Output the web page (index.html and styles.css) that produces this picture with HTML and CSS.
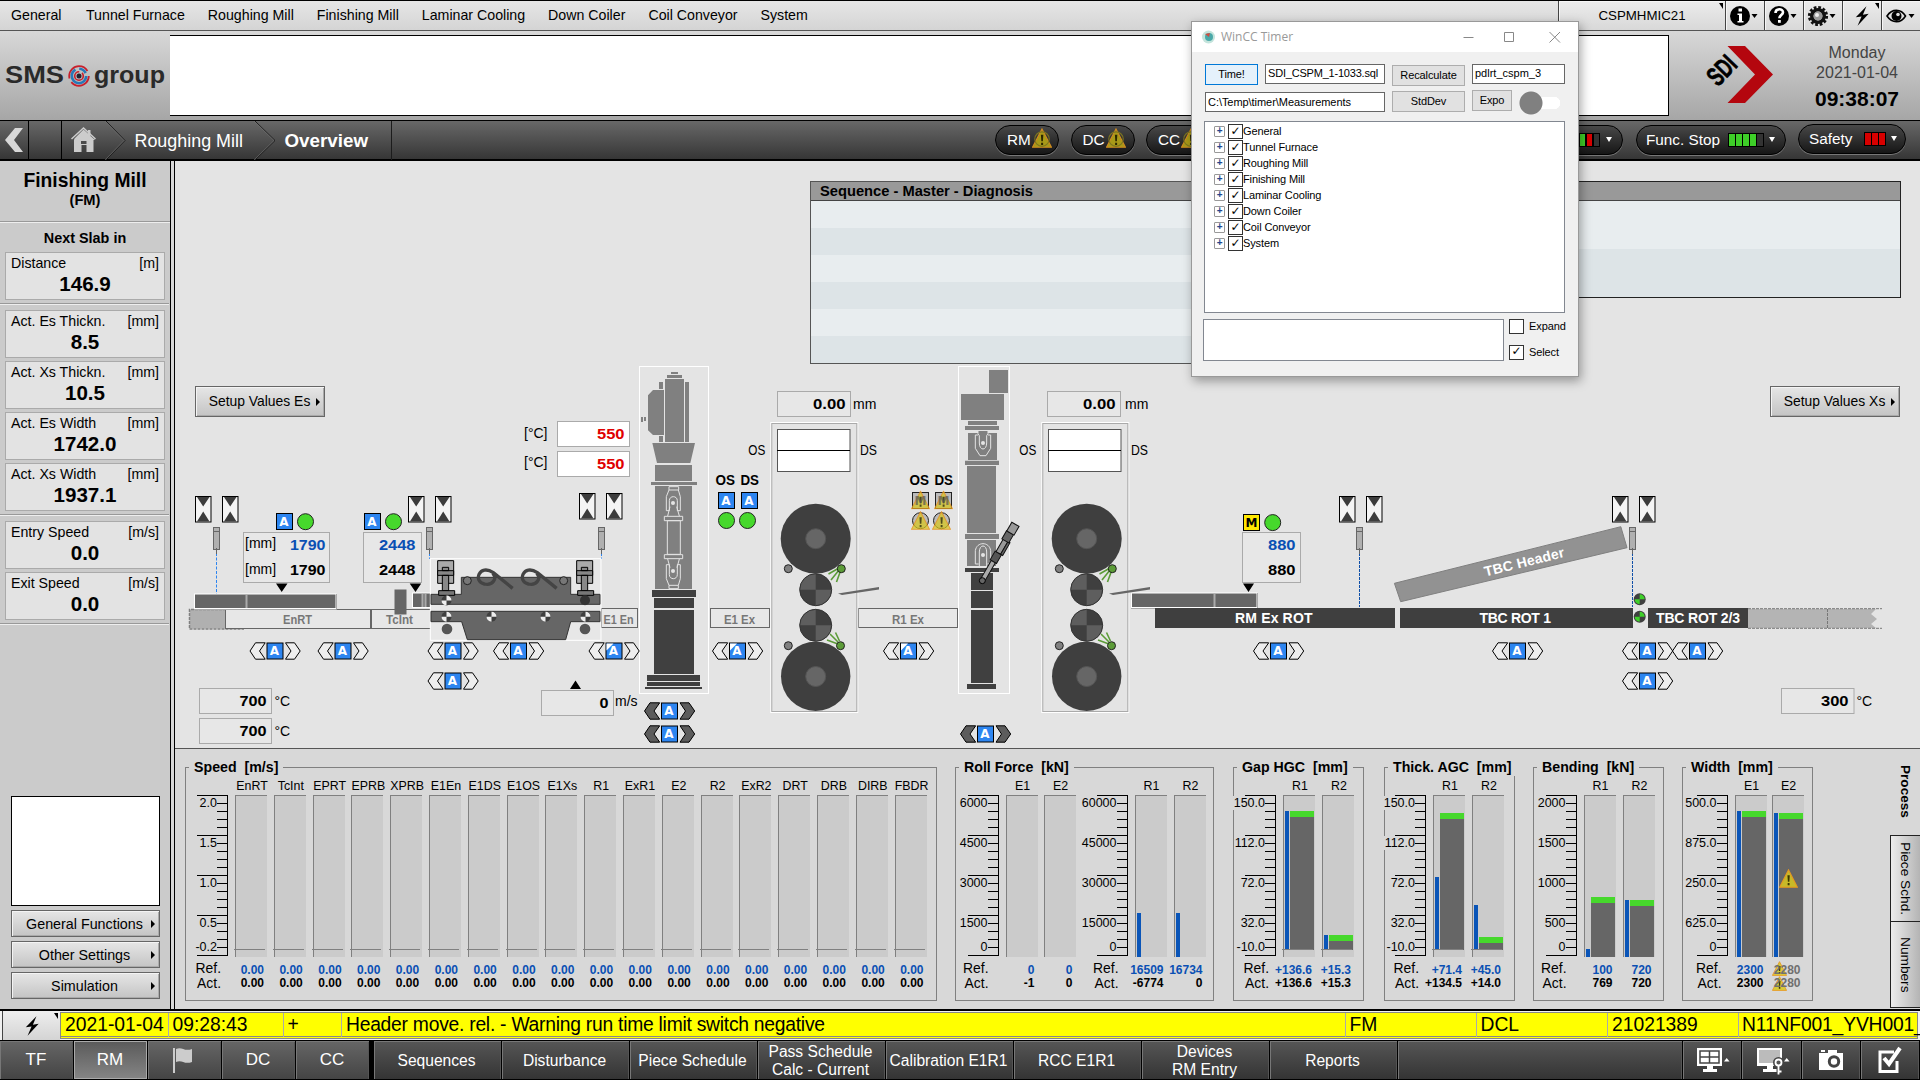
FILE: index.html
```html
<!DOCTYPE html>
<html lang="en">
<head>
<meta charset="utf-8">
<title>Roughing Mill - Overview</title>
<link rel="stylesheet" href="styles.css">
</head>
<body>
<svg class="defs" width="0" height="0">
  <defs>
    <symbol id="warn" viewBox="0 0 18 18"><path d="M9 .8 17.5 17.3H.5z" fill="#d8c81e" fill-opacity=".85" stroke="#e8961e"/><path d="M8 6h2.200l-.4 6H8.400zM8.200 13.300h1.800v2H8.200z" fill="#3c3800"/></symbol>
    <symbol id="warnDim" viewBox="0 0 18 18"><path d="M9 .8 17.5 17.3H.5z" fill="#a89a18" stroke="#d08a20"/><circle cx="9" cy="10" r="6.500" fill="none" stroke="#7c7420"/><path d="M8 6h2.200l-.4 6H8.400zM8.200 13.300h1.800v2H8.200z" fill="#2c2800"/></symbol>
    <symbol id="bolt" viewBox="0 0 18 22"><path d="M14 0 2 12.500l6.500-1L4 22 16.500 8.500l-6.500 1z" fill="#000"/></symbol>
    <g id="valve"><rect x=".5" y=".5" width="15.500" height="25.500" fill="#f4f4f4" stroke="#000"/><path d="M2 1h12.500L8.200 10.500zM2 25.500h12.500L8.200 15.500z" fill="#3c3c3c"/></g>
    <g id="sensor"><rect x="-3" y=".5" width="6" height="22" fill="#b0b0b0" stroke="#666"/><path d="M-3 4.500h6M0 21v6" stroke="#666" fill="none"/></g>
    <g id="modeA"><rect x="-8" y="-8" width="16" height="16" fill="#2d85f0" stroke="#000"/><text x="-.5" y="4.300" class="mode">A</text></g>
    <g id="arrows"><path d="M-25 0-19.500-8.200H-9.800L-15.500 0-9.800 8.200h-9.700zM25.200 0 19.500-8.200H10.500L16 0l-5.500 8.200h9z" stroke="#000"/></g>
    <g id="drive"><use href="#arrows" fill="#eee"/><use href="#modeA"/></g>
    <g id="driveOn"><use href="#arrows" fill="#5c5c5c"/><use href="#modeA"/></g>
    <g id="drivePart"><use href="#drive"/><path d="M-7.500-7.500h7l-7 7z" fill="#fff"/></g>
    <g id="quad"><circle r="16" fill="#3f3f3f"/><path d="M0 0V-16A16 16 0 0 0-16 0zM0 0V16A16 16 0 0 0 16 0z" fill="#5e5e5e"/><circle r="16" fill="none" stroke="#333"/></g>
    <g id="mark"><circle r="5" fill="#3f3f3f"/><path d="M0 0V-5A5 5 0 0 1 5 0zM0 0V5A5 5 0 0 1-5 0z" fill="#eee"/></g>
    <g id="markOn"><circle r="6" fill="#3f3f3f"/><path d="M0 0V-5A5 5 0 0 1 5 0zM0 0V5A5 5 0 0 1-5 0z" fill="#3fd02a"/></g>
    <g id="stand">
      <rect x="770.800" y="422.500" width="87" height="290" fill="none" stroke="#fff"/>
      <rect x="771.800" y="423.500" width="85" height="288" fill="none" stroke="#aaa"/>
      <rect x="777.500" y="429.500" width="72.500" height="42" fill="#fff" stroke="#555"/><path d="M777 450.500h73" stroke="#000"/>
      <g fill="#3f3f3f"><circle cx="815.700" cy="538.700" r="35"/><circle cx="815.700" cy="676.300" r="34.700"/></g>
      <g fill="#666" stroke="#555"><circle cx="815.700" cy="538.700" r="10"/><circle cx="815.700" cy="676.500" r="10"/></g>
      <use href="#quad" x="815.700" y="589.700"/><use href="#quad" x="815.700" y="625.300"/>
      <g fill="#808080" stroke="#222"><circle cx="788.300" cy="568.700" r="4"/><circle cx="788.300" cy="645.700" r="4"/></g>
      <g stroke="#5c9c38" stroke-width="1.600"><path d="M839 568l-10.500 6M839 570l-8 10M840.500 571l-4 11M838 644l-11-4M838 642l-8-8M839.500 641l-4-8.500"/></g>
      <g fill="#5c9c38" stroke="#222"><circle cx="841.300" cy="568.700" r="4"/><circle cx="840.500" cy="645.700" r="4"/></g>
      <path d="M838 593.500 879 587v2.500L842 595z" fill="#666"/>
      <text x="748.300" y="455" class="t" textLength="17" lengthAdjust="spacingAndGlyphs">OS</text><text x="860" y="455" class="t" textLength="17" lengthAdjust="spacingAndGlyphs">DS</text>
    </g>
  </defs>
</svg>

<nav class="menu">
  <span>General</span><span>Tunnel Furnace</span><span>Roughing Mill</span><span>Finishing Mill</span><span>Laminar Cooling</span><span>Down Coiler</span><span>Coil Conveyor</span><span>System</span>
  <div class="tools">
    <div class="tool host notch">CSPMHMIC21</div>
    <div class="tool"><svg width="34" height="26"><circle cx="12" cy="13" r="10"/><path d="M10.500 5.500h3.500v3h-3.500zM9.500 10.500H14V18h1.500v1.500h-6V18H11v-6H9.500z" fill="#fff"/><path d="M23.500 11h6l-3 4z"/></svg></div>
    <div class="tool"><svg width="34" height="26"><circle cx="12" cy="13" r="10"/><path d="M8.500 10c0-5 7.500-4.800 7.500-.8 0 2.800-3.600 3-3.600 6" fill="none" stroke="#fff" stroke-width="2.600"/><path d="M11 17h2.800v2.800H11z" fill="#fff"/><path d="M23.500 11h6l-3 4z"/></svg></div>
    <div class="tool"><svg width="34" height="26"><circle cx="12" cy="13" r="8.600" fill="none" stroke="#111" stroke-width="3" stroke-dasharray="2.700 1.800"/><circle cx="12" cy="13" r="6.200" fill="none" stroke="#111" stroke-width="3.600"/><circle cx="12" cy="13" r="4.500" fill="#999"/><circle cx="11" cy="12" r="2" fill="#eee"/><path d="M23.500 11h6l-3 4z"/></svg></div>
    <div class="tool notch"><svg class="boltic"><use href="#bolt"/></svg></div>
    <div class="tool"><svg width="34" height="26"><path d="M3 13c5-7.500 14-7.500 18.500 0-4.500 7.500-13.500 7.500-18.500 0z" fill="none" stroke="#000" stroke-width="1.600"/><circle cx="12.500" cy="13" r="5"/><circle cx="14" cy="11.500" r="1.800" fill="#ddd"/><path d="M24.500 11h6l-3 4z"/></svg></div>
  </div>
</nav>

<header class="head">
  <div class="brand"><svg width="168" height="36"><text x="5" y="25" class="sms" textLength="59" lengthAdjust="spacingAndGlyphs">SMS</text><text x="94" y="25" class="sms" textLength="71" lengthAdjust="spacingAndGlyphs">group</text>
    <g fill="none"><circle cx="79" cy="18" r="9.800" stroke="#c8202c" stroke-width="1.800" stroke-dasharray="24 4 28 6"/><circle cx="79" cy="18" r="7.200" stroke="#2878b8" stroke-width="2.600" stroke-dasharray="30 4 8 3"/><circle cx="79" cy="18" r="4.300" stroke="#c8202c" stroke-width="1.600" stroke-dasharray="20 3"/></g><circle cx="79" cy="18" r="2.500" fill="#223"/></svg></div>
  <div class="board"></div>
  <div class="sdi"><svg width="80" height="64"><path d="M27.500 3H45L73 31.500 45 60H27.500L55 31.500z" fill="#b4060e"/><text class="sditext" transform="translate(18 44.500) rotate(-46)" textLength="30" lengthAdjust="spacingAndGlyphs">SDI</text></svg></div>
  <div class="clock"><div>Monday</div><div>2021-01-04</div><b>09:38:07</b></div>
</header>

<div class="crumbs">
  <div class="back"><svg width="26" height="38"><path d="M13 7h8L12 19l9 12h-8L3 19z" fill="#d8d8d8"/></svg></div>
  <div class="gap"></div>
  <svg class="trail" width="331" height="39"><path d="M12.500 17.500 21.500 8.500l4.500 4V9H28.500v6l4.500 4H31.500v12H24.500v-7h-5v7h-7.500V19z" fill="#ccc"/><path d="M22.500 20h-3.500v3h5.500v-3z" fill="#4c4c4c"/><path d="M9.500 18 21.500 7 33.500 18" fill="none" stroke="#ccc" stroke-width="1.500"/><g fill="none" stroke="#1c1c1c"><path d="M44 0 63 19.500 44 39M193 0l20 19.500L193 39M329.500 0v39"/></g><g fill="none" stroke="#777" stroke-opacity=".6"><path d="M43 0 62 19.500 43 39M192 0l20 19.500L192 39"/></g><text x="72.500" y="26" class="crumb">Roughing Mill</text><text x="222.500" y="26" class="crumb here">Overview</text></svg>
  <div class="pills">
    <div class="pill"><span>RM</span><svg class="w"><use href="#warnDim"/></svg></div>
    <div class="pill"><span>DC</span><svg class="w"><use href="#warnDim"/></svg></div>
    <div class="pill"><span>CC</span><svg class="w"><use href="#warnDim"/></svg></div>
    <div class="pill wide mode1"><i class="g"></i><i class="r"></i><i class="g"></i><i class="r"></i><i></i><em></em></div>
    <div class="pill wide func"><span>Func. Stop</span><i class="g"></i><i class="g"></i><i class="g"></i><i class="g"></i><i></i><em></em></div>
    <div class="pill wide safety"><span>Safety</span><i class="r"></i><i class="r"></i><i class="r"></i><em></em></div>
  </div>
</div>

<div class="middle">
  <aside class="side">
    <div class="title"><h1>Finishing Mill</h1><p>(FM)</p></div>
    <h2>Next Slab in</h2>
    <div class="val"><div><span>Distance</span><span>[m]</span></div><b>146.9</b></div>
    <hr>
    <div class="val"><div><span>Act. Es Thickn.</span><span>[mm]</span></div><b>8.5</b></div>
    <div class="val"><div><span>Act. Xs Thickn.</span><span>[mm]</span></div><b>10.5</b></div>
    <div class="val"><div><span>Act. Es Width</span><span>[mm]</span></div><b>1742.0</b></div>
    <div class="val"><div><span>Act. Xs Width</span><span>[mm]</span></div><b>1937.1</b></div>
    <hr>
    <div class="val"><div><span>Entry Speed</span><span>[m/s]</span></div><b>0.0</b></div>
    <div class="val"><div><span>Exit Speed</span><span>[m/s]</span></div><b>0.0</b></div>
    <hr>
    <div class="blank"></div>
    <div class="btn">General Functions</div>
    <div class="btn">Other Settings</div>
    <div class="btn">Simulation</div>
  </aside>

  <main>
    <section class="scene">
      <div class="table seq"><h3>Sequence - Master - Diagnosis</h3><div></div><div></div><div></div><div></div><div></div><div></div></div>
      <div class="table sub"><h3></h3><div></div><div></div></div>
      <div class="btn setup es">Setup Values Es</div>
      <div class="btn setup xs">Setup Values Xs</div>
      <svg class="plant" width="1745" height="587" viewBox="175 161 1745 587">
        <!-- entry side -->
        <use href="#valve" x="195" y="496"/><use href="#valve" x="222" y="496"/><use href="#valve" x="408" y="496"/><use href="#valve" x="435" y="496"/><use href="#valve" x="579" y="493"/><use href="#valve" x="606" y="493"/>
        <use href="#valve" x="1339" y="496"/><use href="#valve" x="1366" y="496"/><use href="#valve" x="1612" y="496"/><use href="#valve" x="1639" y="496"/>
        <g stroke="#2d85f0" stroke-dasharray="3 1.500"><path d="M216.500 553v41M429.500 553v6M601.500 553v6"/></g>
        <g stroke="#1050a8" stroke-dasharray="3 1"><path d="M1359.500 553v54M1632.500 553v54"/></g>
        <use href="#sensor" x="216.500" y="527"/><use href="#sensor" x="429.500" y="527"/><use href="#sensor" x="601.500" y="527"/><use href="#sensor" x="1359.500" y="527"/><use href="#sensor" x="1632.500" y="527"/>
        <use href="#modeA" x="284.500" y="521.500"/><use href="#modeA" x="372.500" y="521.500"/>
        <g fill="#46d82c" stroke="#222"><circle cx="305.500" cy="521.700" r="8"/><circle cx="393.500" cy="521.700" r="8"/><circle cx="726.500" cy="520.500" r="8"/><circle cx="747.500" cy="520.500" r="8"/><circle cx="1272.700" cy="522.600" r="8"/></g>
        <g fill="#e7e7e7" stroke="#aaa"><rect x="243.500" y="532.500" width="86" height="50"/><rect x="363.500" y="532.500" width="58" height="50"/><rect x="1242.500" y="532.500" width="58" height="50"/>
          <rect x="199.500" y="688.500" width="72" height="25"/><rect x="199.500" y="718.500" width="72" height="25"/><rect x="541.500" y="690.500" width="72" height="25"/><rect x="777.500" y="391.500" width="73" height="25"/><rect x="1047.500" y="391.500" width="73" height="25"/><rect x="1781.500" y="688.500" width="72.500" height="25"/></g>
        <g fill="#fff" stroke="#aaa"><rect x="557.500" y="421.500" width="72" height="25"/><rect x="557.500" y="451.500" width="72" height="25"/></g>
        <g class="t"><text x="245" y="548">[mm]</text><text x="245" y="573.500">[mm]</text><text x="274.500" y="706">°C</text><text x="274.500" y="736">°C</text><text x="524" y="438">[°C]</text><text x="524" y="467">[°C]</text><text x="615" y="706">m/s</text><text x="853" y="409">mm</text><text x="1125" y="409">mm</text><text x="1856.500" y="706">°C</text></g>
        <g class="v ref"><text x="290" y="550" textLength="35.500" lengthAdjust="spacingAndGlyphs">1790</text><text x="379" y="550" textLength="36.500" lengthAdjust="spacingAndGlyphs">2448</text><text x="1268" y="550" textLength="27.500" lengthAdjust="spacingAndGlyphs">880</text></g>
        <g class="v"><text x="290" y="575" textLength="35.500" lengthAdjust="spacingAndGlyphs">1790</text><text x="379" y="575" textLength="36.500" lengthAdjust="spacingAndGlyphs">2448</text><text x="1268" y="575" textLength="27.500" lengthAdjust="spacingAndGlyphs">880</text><text x="239.500" y="706" textLength="27" lengthAdjust="spacingAndGlyphs">700</text><text x="239.500" y="736" textLength="27" lengthAdjust="spacingAndGlyphs">700</text><text x="599.500" y="708" textLength="9" lengthAdjust="spacingAndGlyphs">0</text><text x="813" y="409" textLength="32.500" lengthAdjust="spacingAndGlyphs">0.00</text><text x="1083" y="409" textLength="32.500" lengthAdjust="spacingAndGlyphs">0.00</text><text x="1821" y="706" textLength="27.500" lengthAdjust="spacingAndGlyphs">300</text></g>
        <g class="v red"><text x="597" y="439.300" textLength="27.500" lengthAdjust="spacingAndGlyphs">550</text><text x="597" y="469.300" textLength="27.500" lengthAdjust="spacingAndGlyphs">550</text></g>
        <path d="M276 583.500h11.500L281.700 592zM409.700 583.500h11.500L415.500 592zM1243 583.500h11L1248.500 592zM570 689h11l-5.500-8.500z"/>
        <rect x="189.500" y="609.500" width="36" height="19" fill="#b0b0b0"/><path d="M226 609.500h-36.500v19.500H244" fill="none" stroke="#808080" stroke-width="1.500" stroke-dasharray="3 1"/>
        <g fill="#e7e7e7" stroke="#666"><rect x="225.500" y="609.500" width="145" height="19"/><rect x="371.500" y="609.500" width="60" height="19"/><rect x="601.500" y="608.500" width="36" height="19"/><rect x="710.500" y="608.500" width="59" height="19"/><rect x="858.500" y="608.500" width="99" height="19"/></g>
        <g class="rt"><text x="283" y="624" textLength="29" lengthAdjust="spacingAndGlyphs">EnRT</text><text x="386" y="624" textLength="27" lengthAdjust="spacingAndGlyphs">TcInt</text><text x="603.500" y="623.500" textLength="30" lengthAdjust="spacingAndGlyphs">E1 En</text><text x="724" y="623.500" textLength="31" lengthAdjust="spacingAndGlyphs">E1 Ex</text><text x="892" y="623.500" textLength="32" lengthAdjust="spacingAndGlyphs">R1 Ex</text></g>
        <g fill="#666" stroke="#fff"><rect x="194.500" y="594" width="141.500" height="14.500"/><rect x="412.500" y="593" width="18" height="14.500"/><rect x="1131.500" y="593" width="125.500" height="14.500"/></g>
        <path d="M194 609.500h142.500V594M1131 608.500h126.500V593" fill="none" stroke="#aaa"/>
        <path d="M246.500 595v13M422.500 594v13M425.500 594v13M1214.500 594v13" stroke="#aaa" stroke-width="2"/>
        <rect x="394.500" y="589.500" width="12" height="25" fill="#666"/>

        <!-- descaler -->
        <g transform="translate(420 360) scale(.33333)">
          <rect x="31" y="596" width="512" height="245" fill="#e7e7e7" stroke="#fff" stroke-width="3"/>
          <g fill="#666" stroke="#333" stroke-width="3"><path d="M33 703h91v-51h328v51h88v30H33zM33 754h507v31h-88l-15 54H142l-17-54H33z"/></g>
          <path d="M410 685 352 638C310 610 290 665 325 672 350 678 365 655 350 640M278 685 220 638C178 610 158 665 193 672 218 678 233 655 218 640" fill="none" stroke="#444" stroke-width="10"/>
          <g fill="#777" stroke="#222" stroke-width="3"><circle cx="142" cy="662" r="12"/><circle cx="431" cy="662" r="12"/></g>
          <g id="cyl" stroke="#000" stroke-width="3"><path d="M53 602h48v68H53z" fill="#aaa"/><path d="M53 632h48v14H53zM67 646h19v46H67zM67 622h19v10H67z" fill="#888"/><path d="M56 692h48v14H56z" fill="#777"/></g>
          <use href="#cyl" x="417"/>
          <circle cx="81" cy="807" r="16" fill="#555"/><circle cx="495" cy="807" r="16" fill="#555"/><circle cx="495" cy="721" r="15" fill="#333"/>
        </g>
        <use href="#mark" x="446.500" y="600.500"/><use href="#mark" x="446.500" y="616.700"/><use href="#mark" x="491.500" y="616.700"/><use href="#mark" x="545.500" y="616.700"/><use href="#mark" x="585.500" y="616.700"/>

        <!-- edger E1 -->
        <g transform="translate(420 360) scale(.33333)">
          <rect x="658.500" y="19.500" width="207" height="981" fill="none" stroke="#fff" stroke-width="3"/>
          <path fill="#808080" d="M753 36h21v6h-21zM741 45h45v9h-45zM735 57h57v189h-57zM795 66h12v180h-12zM717 66h12v21h-12zM717 228h12v18h-12zM699 90h33v135h-33l-15-14V106zM663 171h6v15h-6zM672 171h6v12h-6zM697 249h128l-14 60H711zM705 315h111v48H705zM693 366h138v9H693zM705 378h111v309H705z"/>
          <path fill="#404040" d="M696 690h132v21H696zM702 714h120v30H702zM702 750h120v192H702zM681 945h159v18H681zM681 966h159v12H681zM675 981h171v6H675z"/>
          <g fill="none" stroke="#e4e4e4" stroke-width="3"><path d="M747 380h29v10h-29zM747 390l-8 20v42h9v-30c0-16 24-16 24 0v30h9v-42l-6-20M750 440l-7 28M770 440l8 28M733 469h55v13h-55zM742 482h39v101h-39zM733 584h55v12h-55zM743 597l7 26M778 597l-7 26M747 686v-10l-8-20v-42h9v30c0 16 24 16 24 0v-30h9v42l-6 20v10zM747 676h28"/></g>
          <circle cx="759" cy="429" r="6" fill="#e4e4e4"/><circle cx="759" cy="633" r="6" fill="#e4e4e4"/>
        </g>
        <g class="osds"><text x="715.500" y="485" textLength="19.500" lengthAdjust="spacingAndGlyphs">OS</text><text x="740.500" y="485" textLength="18.500" lengthAdjust="spacingAndGlyphs">DS</text><text x="909.500" y="485" textLength="19.500" lengthAdjust="spacingAndGlyphs">OS</text><text x="934.500" y="485" textLength="18.500" lengthAdjust="spacingAndGlyphs">DS</text></g>
        <use href="#modeA" x="726.500" y="500.500"/><use href="#modeA" x="749.500" y="500.500"/>

        <use href="#stand"/><use href="#stand" x="271"/>

        <!-- edger E2 -->
        <g transform="translate(880 360) scale(.33333)">
          <rect x="235.500" y="19.500" width="153" height="981" fill="none" stroke="#fff" stroke-width="3"/>
          <path fill="#808080" d="M327 30h57v69h-57zM243 102h129v78H243zM264 183h87v12h-87zM255 198h102v12H255zM264 219h87v81h-87zM255 302h102v13H255zM261 318h87v201h-87zM255 522h102v15H255zM261 540h87v78h-87zM294 213h30v12h-30z"/>
          <path fill="#404040" d="M255 624h102v12H255zM273 639h66v51h-66zM273 693h66v51h-66zM273 750h66v219h-66zM261 972h87v15h-87z"/>
          <path d="M294 213v8l4 6v22c0 24 22 24 22 0v-22l4-6v-8M294 225h-8v40l14 22h18l14-22v-40h-8M298 618v-42c0-24 22-24 22 0v42M286 612v-40c4-28 42-28 46 0v40h-10M286 612h10" fill="none" stroke="#e4e4e4" stroke-width="3"/>
          <circle cx="309" cy="249" r="6" fill="#e4e4e4"/><circle cx="309" cy="585" r="6" fill="#e4e4e4"/>
          <g transform="translate(307 662) rotate(30)" stroke="#111" stroke-width="3"><path d="M-7 0v-70H7V0z" fill="#aaa"/><path d="M-11-96h22v30h-22z" fill="#555"/><path d="M-8-140H8v44H-8z" fill="#999"/><path d="M8-140h7v44H8z" fill="#666"/><path d="M-12-166h24v28h-24z" fill="#666"/><path d="M-11-196h25v30h-25z" fill="#999"/></g>
          <circle cx="307" cy="662" r="9" fill="#666" stroke="#000" stroke-width="3"/>
        </g>
        <g fill="#bbb" stroke="#222"><rect x="912.500" y="492.500" width="16" height="16"/><rect x="935.500" y="492.500" width="16" height="16"/><circle cx="920.500" cy="520.700" r="8"/><circle cx="941.500" cy="520.700" r="8"/></g>
        <g opacity=".85"><use href="#warn" x="911" y="490.500" width="19" height="19"/><use href="#warn" x="934" y="490.500" width="19" height="19"/><use href="#warn" x="911" y="511" width="19" height="19"/><use href="#warn" x="932" y="511" width="19" height="19"/></g>
        <g class="mode dim"><text x="920.500" y="505">M</text><text x="943.500" y="505">M</text></g>
        <rect x="1243.500" y="514.500" width="16" height="16" fill="#ffe800" stroke="#000"/><text x="1251.500" y="527" class="mode blk">M</text>

        <!-- exit side -->
        <g fill="#3f3f3f"><rect x="1155" y="608" width="240" height="20"/><rect x="1400" y="608" width="233" height="20"/><rect x="1648" y="608" width="100" height="20"/></g>
        <path d="M1748 609h128l-5 5 6 5-6 5 5 4h-128z" fill="#b4b4b4"/><path d="M1748 608.700h134M1748 628.300h134M1827.500 609v19" stroke="#777" stroke-dasharray="3 1"/>
        <g class="rot"><text x="1235" y="623.300" textLength="77.500">RM Ex ROT</text><text x="1479.500" y="623.300" textLength="71.500">TBC ROT 1</text><text x="1656" y="623.300" textLength="84">TBC ROT 2/3</text></g>
        <path d="M1394.400 583.300 1620.800 526.700 1627 547.700 1400.700 601.700z" fill="#929292" stroke="#808080"/>
        <text class="rot" transform="translate(1485.500 576.500) rotate(-13.900)" textLength="82">TBC Header</text>
        <use href="#markOn" x="1639.700" y="599.300"/><use href="#markOn" x="1639.700" y="616.700"/>

        <use href="#drive" x="275" y="651"/><use href="#drive" x="343" y="651"/><use href="#drive" x="453" y="651"/><use href="#drive" x="453" y="681"/><use href="#drive" x="518.500" y="651"/><use href="#drivePart" x="614" y="651"/><use href="#drivePart" x="737.500" y="651"/><use href="#drivePart" x="908.500" y="651"/>
        <use href="#driveOn" x="669.500" y="711"/><use href="#driveOn" x="669.500" y="734"/><use href="#driveOn" x="985.500" y="734"/>
        <use href="#drive" x="1278.500" y="651"/><use href="#drive" x="1517.500" y="651"/><use href="#drive" x="1647.500" y="651"/><use href="#drive" x="1697.500" y="651"/><use href="#drive" x="1647.500" y="681"/>
      </svg>
    </section>
    <section class="lower">
      <div class="charts" id="charts"></div>
      <div class="tabs"><div class="tab on">Process</div><div class="tab">Piece Schd.</div><div class="tab">Numbers</div></div>
    </section>
  </main>
</div>

<div class="alarm">
  <div class="alarmbtn notch"><svg class="boltic"><use href="#bolt"/></svg></div>
  <div class="row"><span>2021-01-04</span><span>09:28:43</span><span>+</span><span class="msg">Header move. rel. - Warning run time limit switch negative</span><span>FM</span><span>DCL</span><span>21021389</span><span class="id">N11NF001_YVH001_</span></div>
</div>

<footer class="foot">
  <div class="area">TF</div><div class="area sel">RM</div><div class="area"><svg width="24" height="28"><path d="M2 2v25" stroke="#ccc" stroke-width="2"/><path d="M4 3c6-3 8 3 16 0v13c-8 3-10-3-16 0z" fill="#ccc"/></svg></div><div class="area">DC</div><div class="area">CC</div>
  <div class="page first">Sequences</div><div class="page">Disturbance</div><div class="page">Piece Schedule</div><div class="page">Pass Schedule<br>Calc - Current</div><div class="page">Calibration E1R1</div><div class="page">RCC E1R1</div><div class="page">Devices<br>RM Entry</div><div class="page">Reports</div>
  <div class="fill"></div>
  <div class="act"><svg width="36" height="28"><path d="M3 2h25v18H3zM13 20h6v3h4v3H9v-3h4z" fill="#fff"/><path d="M6 5h19v12H6zM15.500 5v12M6 11h19" fill="none" stroke="#444" stroke-width="1.500"/><path d="M30 15.500h5.500L32.700 12z" fill="#fff"/></svg></div>
  <div class="act"><svg width="36" height="30"><path d="M3 3h25v18H3zM13 21h6v3h4v3H9v-3h4z" fill="#fff"/><path d="M5 5h21v13H5z" fill="#bbb"/><path d="M24.500 17v12" stroke="#444" stroke-width="4"/><circle cx="24.500" cy="17.500" r="3" fill="#555" stroke="#444" stroke-width="5"/><circle cx="24.500" cy="17.500" r="3" fill="#555" stroke="#fff" stroke-width="1.800"/><path d="M24.500 20v9.500M24.500 26.500h3" stroke="#fff" stroke-width="1.800"/><path d="M30 16.500h5.500L32.700 13z" fill="#fff"/></svg></div>
  <div class="act"><svg width="30" height="28"><path d="M3 7h9V4h9v3h6v17H3zM5 4h4v2H5z" fill="#fff"/><circle cx="18" cy="15.500" r="4.700" fill="none" stroke="#444" stroke-width="3"/></svg></div>
  <div class="act"><svg width="30" height="30"><path d="M22 16v10.500H5V7h14" fill="none" stroke="#fff" stroke-width="3"/><path d="M9 13l5 6L25 3" fill="none" stroke="#fff" stroke-width="4"/></svg></div>
</footer>

<div class="win">
  <div class="bar"><svg width="16" height="16"><circle cx="7.500" cy="8" r="6.500" fill="#c4e4dc"/><circle cx="8" cy="8" r="4" fill="#4aa8a8"/><path d="M4 5l5-1-1 4z" fill="#d04c40"/></svg><span>WinCC Timer</span>
    <svg class="ctl" width="100" height="12"><path d="M.5 6.500h10M41.500 1.500h9v9h-9zM86.500 1l10.500 10.500M97 1 86.500 11.500" fill="none" stroke="#888"/></svg></div>
  <div class="form">
    <div class="b time">Time!</div><div class="in sql">SDI_CSPM_1-1033.sql</div><div class="b rec">Recalculate</div><div class="in db">pdlrt_cspm_3</div>
    <div class="in path">C:\Temp\timer\Measurements</div><div class="b std">StdDev</div><div class="b exp">Expo</div><div class="toggle"></div>
  </div>
  <ul class="tree"><li>General</li><li>Tunnel Furnace</li><li>Roughing Mill</li><li>Finishing Mill</li><li>Laminar Cooling</li><li>Down Coiler</li><li>Coil Conveyor</li><li>System</li></ul>
  <div class="end"><div class="out"></div><div class="opts"><label>Expand</label><label class="ck">Select</label></div></div>
</div>
<script src="charts.js"></script>
</body>
</html>
```
FILE: styles.css
```css
* { box-sizing: border-box; }
body { margin: 0; width: 1920px; height: 1080px; overflow: hidden; position: relative; background: #d8d8d8; color: #000; font: 14.3px/16px "Liberation Sans", Arial, sans-serif; }
h1, h2, h3, p, ul { margin: 0; padding: 0; }
svg { display: block; flex: none; }
.defs { position: absolute; }

/* top menu */
.menu { height: 31px; display: flex; align-items: center; border-top: 1px solid #000; border-bottom: 1px solid #555; background: linear-gradient(#e6e6e6, #d4d4d4); padding-left: 11px; white-space: nowrap; }
.menu > span { margin-right: 23px; padding-bottom: 1px; font-size: 14.200px; }
.menu > span:nth-child(1) { margin-right: 24.500px; }
.tools { margin-left: auto; display: flex; height: 29px; }
.tool { width: 39px; display: flex; align-items: center; justify-content: center; border-left: 1px solid #444; background: linear-gradient(#ececec, #d8d8d8); box-shadow: inset 1px 1px #f6f6f6; position: relative; }
.host { width: 167px; font-size: 13.300px; }
.notch { position: relative; }
.notch::after { content: ""; position: absolute; right: 2px; top: 2px; border: 3px solid transparent; border-top-color: #000; border-right-color: #000; border-width: 3px 2.500px; }
.boltic { width: 16px; height: 20px; }

/* header */
.head { height: 89px; display: flex; background: linear-gradient(#d8d8d8, #a6a6a6); padding: 4px 0; }
.brand { width: 170px; padding-top: 23px; }
.sms { font-weight: bold; font-size: 23px; fill: #2a2a2a; }
.board { width: 1499px; background: #fff; border: 1px solid #000; border-left: 0; }
.sdi { width: 130px; padding: 8px 0 0 31px; }
.sditext { font-weight: bold; font-size: 27px; stroke: #000; stroke-width: .6px; }
.clock { width: 116px; text-align: center; font-size: 16px; line-height: 20px; color: #444; padding-top: 8px; }
.clock b { display: block; font-size: 21px; line-height: 24px; color: #000; margin-top: 4px; }

/* breadcrumb bar */
.crumbs { height: 41px; display: flex; border-top: 1px solid #000; border-bottom: 2px solid #000; background: linear-gradient(#686868, #363636); color: #fff; }
.back { width: 29px; border-right: 1px solid #000; padding-left: 2px; }
.gap { width: 33px; border-right: 1px solid #000; }
.trail { margin-top: 0; }
.crumb { font-size: 17.900px; fill: #fff; }
.here { font-weight: bold; font-size: 18.800px; }
.pills { flex: 1; display: flex; align-items: flex-start; padding: 4px 12px 0 602px; }
.pill { width: 64px; height: 30px; margin-right: 11.500px; border: 1.500px solid #000; border-radius: 15px; background: linear-gradient(#484848, #161616); box-shadow: 0 1px #777; display: flex; align-items: center; padding: 0 0 1px 11px; font-size: 15.300px; flex: none; }
.w { width: 20px; height: 20px; margin: -3px 0 0 1px; }
.wide i { width: 7.500px; height: 14px; border: 1px solid #000; background: #333; margin-right: -.5px; }
.wide i.g { background: #3ecf28; }
.wide i.r { background: #d80000; }
.wide em { border: 4px solid transparent; border-top: 5px solid #fff; border-bottom: 0; margin-left: 6px; border-width: 5px 3.500px 0; }
.mode1 { width: 112px; margin-left: 289px; margin-right: 13.500px; padding-left: 53px; }
.func { width: 149.500px; margin-right: 12.500px; padding-left: 9px; }
.func span { width: 82px; }
.safety { width: 108px; margin: -1px 0 0; padding-left: 10px; }
.safety span { width: 55px; }

/* left column */
.middle { display: flex; height: 848px; }
.side { width: 175px; height: 848px; background: #cbcbcb; border-right: 1px solid #000; position: relative; padding: 0 9px 0 5px; box-shadow: inset -3px 0 #d8d8d8, inset -4px 0 #000; }
.title { height: 60px; text-align: center; padding-top: 9px; font-weight: bold; }
h1 { font-size: 19.300px; line-height: 22px; }
.title p { font-size: 14.700px; }
h2 { font-size: 14.400px; line-height: 16px; text-align: center; margin: 0 0 6px; padding-top: 8px; border-top: 1px solid #999; box-shadow: inset 0 1px #eee; margin-left: -5px; margin-right: -5px; }
.side hr { margin: 3px -4px 5px -5px; height: 2px; border: 0; background: linear-gradient(#999 50%, #eee 50%); }
.val { height: 48px; margin-bottom: 3px; border: 1px solid #aaa; background: #e3e3e3; padding: 2px 5px 0; text-align: center; }
.val div { display: flex; justify-content: space-between; font-size: 14.200px; }
.val b { display: block; margin-top: 1px; font-size: 20.600px; line-height: 23px; }
.blank { height: 110px; margin: 171px 5px 4px 6px; background: #fff; border: 1px solid #000; }
.btn { height: 27px; margin: 0 5px 4px 6px; border: 1px solid #666; background: linear-gradient(#e6e6e6, #c4c4c4); box-shadow: inset 1px 1px #f4f4f4, inset -1px -1px #aaa; display: flex; align-items: center; justify-content: center; padding-right: 2px; position: relative; }
.btn::after { content: ""; position: absolute; right: 4px; top: 50%; margin-top: -4px; border: 4px solid transparent; border-left-color: #000; border-right: 0; }

/* mill diagram */
main { width: 1745px; }
.scene { height: 588px; position: relative; background: #e4e4e4; border-bottom: 1px solid #555; }
.plant { position: absolute; left: 0; top: 0; }
.table { position: absolute; top: 20px; border: 1px solid #555; background: #e8edef; }
.table h3 { height: 19px; background: #999; border-bottom: 1px solid #444; font-size: 14.700px; line-height: 19px; padding-left: 9px; }
.seq { left: 635px; width: 420px; height: 183px; }
.seq div { height: 27px; }
.table div:nth-child(odd) { background: #dde4e7; }
.sub { left: 1060px; width: 666px; height: 117px; border-color: #222; }
.sub div { height: 48px; }
.setup { position: absolute; top: 225px; height: 31px; width: 130px; margin: 0; font-size: 13.900px; padding-right: 1px; padding-bottom: 1px; }
.es { left: 20px; }
.xs { left: 1595px; }
.t { font-size: 14px; }
.v { font-size: 14px; font-weight: bold; }
.ref { fill: #0a50b4; }
.red { fill: #e00000; }
.rt { font-size: 12.500px; font-weight: bold; fill: #777; }
.rot { font-size: 14px; font-weight: bold; fill: #fff; }
.osds { font-size: 14px; font-weight: bold; }
.mode { font: bold 12px "DejaVu Sans", sans-serif; fill: #fff; text-anchor: middle; }
.dim { fill: #555; opacity: .7; }
.blk { fill: #000; }

/* bar charts */
.lower { height: 260px; display: flex; background: #d8d8d8; }
.charts { display: flex; padding: 18px 0 0 10px; width: 1715px; align-items: flex-start; }
.group { height: 234px; border: 1px solid #808080; position: relative; margin-right: var(--after); flex: none; }
.group h4 { position: absolute; left: 3px; top: -9px; margin: 0; padding: 0 5px; background: #d8d8d8; font-size: 14.200px; line-height: 17px; white-space: pre; }
.gauges { display: flex; padding-top: 12px; }
.gauge { display: flex; }
.axis { position: relative; width: var(--w); font-size: 12.500px; margin-right: 7px; }
.ticks { margin: 15px 0 0; height: 161px; border-right: 1.500px solid #000; background: repeating-linear-gradient(#000 0 1px, transparent 1px 8px) right/10px 100% no-repeat, repeating-linear-gradient(#000 0 1px, transparent 1px 40px) right/30px 100% no-repeat; position: relative; }
.ticks span { position: absolute; right: 10px; line-height: 14px; background: #d8d8d8; padding-left: 1px; }
.legend { padding-right: var(--lr); text-align: right; font-size: 13.900px; line-height: 14.500px; padding-top: 5px; }
.col { width: 32px; margin-right: var(--g); }
.col:last-child { margin-right: 0; }
.name { height: 15px; font-size: 12.400px; line-height: 13px; display: flex; justify-content: center; white-space: nowrap; padding-left: 2px; }
.track { height: 162px; background: #cbcbcb; border-left: 1px solid #808080; border-top: 1px solid #808080; position: relative; }
.track.zero::after { content: ""; position: absolute; left: -2px; width: 31px; top: 153px; height: 1px; background: #808080; }
.sp, .mv { position: absolute; }
.sp { left: 1px; width: 4px; background: #0a55b8; }
.mv { left: 6px; width: 24px; background: #666; border-top: 6px solid #46d82c; }
.nums { font-size: 12px; font-weight: bold; line-height: 13px; padding-top: 7px; position: relative; }
.nums div { display: flex; justify-content: flex-end; padding-right: 3px; white-space: nowrap; }
.nums div:first-child { color: #0a50b4; }
.nums.off div { color: #707070; position: relative; z-index: 1; }
.big, .small { position: absolute; }
.big { left: 6px; top: 73px; width: 19px; height: 19px; }
.small { left: 0; top: 3px; width: 15px; height: 17px; }
.small + .small { top: 18px; }
.tabs { width: 30px; padding-top: 8px; }
.tab { height: 87px; width: 30px; writing-mode: vertical-rl; display: flex; align-items: center; justify-content: center; border: 1px solid #222; border-right: 0; margin-top: -1px; background: linear-gradient(90deg, #ececec, #b4b4b4); font-size: 13.700px; padding: 0 1px 0 0; }
.tab.on { height: 79px; margin: 0; border: 0; background: none; font-weight: bold; padding: 6px 1px 16px 0; font-size: 13.600px; }

/* alarm line */
.alarm { height: 31px; display: flex; background: #f0f0f0; border-top: 2px solid #000; padding: 0 2px 0 2px; }
.alarmbtn { width: 59px; height: 29px; background: linear-gradient(#eee, #d4d4d4); border-left: 1px solid #444; display: flex; align-items: center; justify-content: center; }
.row { margin-top: 1px; display: grid; grid-template-columns: 107.500px 115px 58.500px 1003.500px 131px 131.500px 131px 178px; height: 27px; border: 1px solid #888; background: #ff0; border-bottom: 3px double #888; }
.row span { font-size: 19.300px; line-height: 24px; padding-left: 4px; border-right: 1px solid #aaa; white-space: nowrap; overflow: hidden; }
.row .msg { letter-spacing: -.25px; }
.row .id { letter-spacing: -.15px; border-right: 0; overflow: visible; padding-left: 3px; }

/* footer */
.foot { height: 40px; display: flex; background: #000; color: #fff; border-top: 1px solid #000; padding-bottom: 1px; }
.foot > div { display: flex; align-items: center; justify-content: center; text-align: center; background: linear-gradient(#565656, #343434); box-shadow: inset 1px 1px #777, inset -1px 0 #555; margin-right: 1px; line-height: 18px; font-size: 15.600px; white-space: nowrap; flex: none; }
.foot > .area { width: 73px; font-size: 17px; background: linear-gradient(#666, #444); padding-right: 1px; }
.foot > .sel { background: linear-gradient(#5a5a5a, #858585); box-shadow: inset 0 0 0 1px #aaa; }
.foot > .page { width: 127px; padding: 1px 2px 0 0; }
.foot > .first { margin-left: 4px; }
.foot > .fill { flex: 1; }
.foot > .act { width: 58.200px; }

/* timer window */
.win { position: absolute; left: 1191px; top: 21px; width: 388px; height: 356px; background: #f0f0f0; border: 1px solid #999; box-shadow: 2px 4px 10px rgba(0, 0, 0, .35); font-size: 11px; line-height: 13px; }
.bar { height: 30px; background: #fff; display: flex; align-items: center; padding-left: 9px; color: #999; font: 12px/16px "Open Sans", sans-serif; }
.bar span { margin-left: 4px; }
.ctl { margin-left: 170px; }
.form { display: grid; grid-template-columns: 53px 7px 120px 7px 73px 7px 40px 53px; padding: 12px 0 0 13px; height: 69px; grid-template-rows: 28px 21px; align-items: start; }
.b { border: 1px solid #adadad; background: #e1e1e1; height: 21px; display: flex; align-items: center; justify-content: center; }
.b, .sql { letter-spacing: -.1px; }
.in { border: 1px solid #666; background: #fff; height: 20px; padding: 2px 0 0 2px; white-space: nowrap; overflow: hidden; }
.time { background: #e5f1fb; border: 1.500px solid #0078d7; }
.sql { grid-column: 3; letter-spacing: -.2px; }
.rec { grid-column: 5; margin-top: 1px; }
.db { grid-column: 7 / 9; }
.path { grid-column: 1 / 4; }
.in.path { padding-top: 3px; letter-spacing: -.05px; }
.std { grid-column: 5; margin-top: -1px; }
.exp { grid-column: 7; margin-top: -2px; }
.toggle { grid-column: 8; margin: -1px 0 0 7px; width: 43px; height: 24px; background: radial-gradient(circle at 12px 12px, #808080 11px, transparent 12px), linear-gradient(#fff, #fff) 15px 6px/20px 12px no-repeat, radial-gradient(circle at 35px 12px, #fff 6px, transparent 6.500px); }
.tree { list-style: none; height: 192px; width: 361px; margin-left: 12px; border: 1px solid #828790; background: #fff; padding: 1px 0 0 9px; }
.tree li { height: 16px; display: flex; align-items: center; line-height: 16px; position: relative; text-indent: 12px; letter-spacing: -.12px; }
.tree li::before { content: "+"; width: 9px; height: 9px; border: 1px solid #999; border-radius: 1px; color: #24468c; font: bold 10px/7px "Liberation Sans", Arial, sans-serif; text-align: center; margin-right: 6px; }
.tree li::after { content: "✓"; position: absolute; left: 14px; top: 1px; width: 13px; height: 13px; border: 1px solid #333; font: 12px/12px "DejaVu Sans", sans-serif; text-align: center; }
.tree li::before, .tree li::after { text-indent: 0; flex: none; }
.end { display: flex; margin: 6px 0 0 11px; }
.out { width: 301px; height: 42px; background: #fff; border: 1px solid #828790; }
.opts { margin: 1px 0 0 5px; letter-spacing: -.1px; }
.opts label { display: flex; align-items: center; height: 13px; margin-bottom: 13px; }
.opts label::before { content: ""; width: 13px; height: 13px; border: 1px solid #333; background: #fff; margin-right: 5px; font: 12px/11px "DejaVu Sans", sans-serif; text-align: center; }
.opts .ck::before { content: "✓"; }
```
FILE: charts.js
```js
// Each column: [name, reference, actual, reference bar top, actual bar top]
const speed = ["EnRT", "TcInt", "EPRT", "EPRB", "XPRB", "E1En", "E1DS", "E1OS", "E1Xs", "R1", "ExR1", "E2", "R2", "ExR2", "DRT", "DRB", "DIRB", "FBDR"].map(n => [n, "0.00", "0.00"]);
const mm = ["150.0", "112.0", "72.0", "32.0", "-10.0"];
const groups = [
  { title: "Speed  [m/s]", w: 752, after: 18, gauges: [{ w: 42, lr: 7, g: 6.8, zero: 1, base: 154, marks: ["2.0", "1.5", "1.0", "0.5", "-0.2"], cols: speed }] },
  { title: "Roll Force  [kN]", w: 259, after: 19, gauges: [
    { w: 42.5, lr: 10, g: 6, base: 161, marks: ["6000", "4500", "3000", "1500", "0"], cols: [["E1", "0", "-1"], ["E2", "0", "0"]] },
    { w: 52, lr: 9, g: 7, base: 161, marks: ["60000", "45000", "30000", "15000", "0"], cols: [["R1", "16509", "-6774", 117], ["R2", "16734", "0", 117]] }] },
  { title: "Gap HGC  [mm]", w: 131, after: 20, gauges: [{ w: 42, lr: 7, g: 7, zero: 1, base: 154, marks: mm, cols: [["R1", "+136.6", "+136.6", 15, 15], ["R2", "+15.3", "+15.3", 139, 139]] }] },
  { title: "Thick. AGC  [mm]", w: 131, after: 18, gauges: [{ w: 41, lr: 7, g: 7, zero: 1, base: 154, marks: mm, cols: [["R1", "+71.4", "+134.5", 81, 17], ["R2", "+45.0", "+14.0", 109, 141]] }] },
  { title: "Bending  [kN]", w: 131, after: 18, gauges: [{ w: 42.5, lr: 10, g: 7, base: 161, marks: ["2000", "1500", "1000", "500", "0"], cols: [["R1", "100", "769", 153, 101], ["R2", "720", "720", 104, 104]] }] },
  { title: "Width  [mm]", w: 131, after: 0, gauges: [{ w: 44.5, lr: 6, g: 5, base: 161, marks: ["500.0", "875.0", "250.0", "625.0", "0"], cols: [["E1", "2300", "2300", 15, 15], ["E2", "2280", "2280", 17, 17, true]] }] }
];

const warn = cls => `<svg class="${cls}"><use href="#warn"/></svg>`;

function column(c, g) {
  const [name, ref, act, r, a, bad] = c;
  const sp = r === undefined ? "" : `<div class="sp" style="top:${r}px;height:${g.base - r}px"></div>`;
  const mv = a === undefined ? "" : `<div class="mv" style="top:${a}px;height:${g.base - a}px"></div>`;
  return `<div class="col"><div class="name">${name}</div><div class="track${g.zero ? " zero" : ""}">${sp}${mv}${bad ? warn("big") : ""}</div>` +
    `<div class="nums${bad ? " off" : ""}"><div>${ref}</div><div>${act}</div>${bad ? warn("small") + warn("small") : ""}</div></div>`;
}

function gauge(g) {
  const tops = [1, 41, 81, 121, 145];
  const marks = g.marks.map((m, i) => `<span style="top:${tops[i]}px">${m}</span>`).join("");
  return `<div class="gauge" style="--w:${g.w}px;--lr:${g.lr}px;--g:${g.g}px"><div class="axis"><div class="ticks">${marks}</div><div class="legend">Ref.<br>Act.</div></div>${g.cols.map(c => column(c, g)).join("")}</div>`;
}

document.getElementById("charts").innerHTML = groups.map(g =>
  `<div class="group" style="width:${g.w}px;--after:${g.after}px"><h4>${g.title}</h4><div class="gauges">${g.gauges.map(gauge).join("")}</div></div>`).join("");
```
